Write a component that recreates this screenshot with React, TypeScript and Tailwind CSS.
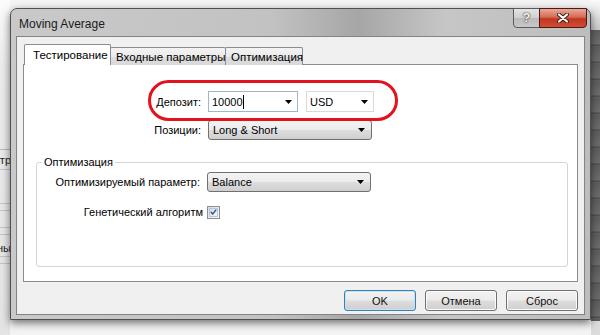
import React from 'react';

const font = "font-['Liberation_Sans','Noto_Sans',sans-serif]";

const Arrow = () => (
    <svg width="7" height="4" viewBox="0 0 7 4" className="shrink-0">
        <path d="M0 0h7L3.5 4z" fill="#000" />
    </svg>
);

// Win7 style drop-down list (grey gradient)
const Combo = ({ value, width }: { value: string; width: string }) => (
    <div className={`${width} h-[20px] flex items-center justify-between pl-[4px] pr-[6px] rounded-[3px] border border-[#707070] bg-[linear-gradient(#f3f3f3,#ececec_48%,#dddddd_52%,#cfcfcf)]`}>
        <span>{value}</span>
        <Arrow />
    </div>
);

const Button = ({ label, primary }: { label: string; primary?: boolean }) => (
    <div className={`w-[72px] h-[21px] flex items-center justify-center rounded-[3px] border ${primary ? 'border-[#3c7fb1] shadow-[inset_0_0_0_1px_#bfe3f7]' : 'border-[#707070] shadow-[inset_0_0_0_1px_#fbfbfb]'} bg-[linear-gradient(#f2f2f2,#ebebeb_48%,#dddddd_52%,#cfcfcf)] text-[#111]`}>
        {label}
    </div>
);

export default function App() {
    return (
        <div className={`${font} w-[600px] h-[335px] overflow-hidden flex bg-[#f4f4f4] text-[11px] leading-[16px] text-black whitespace-nowrap`}>
            {/* background app, left (partly hidden behind the dialog) */}
            <div className="w-[10px] shrink-0 flex flex-col bg-[linear-gradient(#fbfbfb,#ececec_20%,#e4e4e4)] overflow-hidden text-[#222]">
                <div className="h-[150px] border-b border-[#b8b8b8]" />
                <div className="h-[20px] border-b border-[#c4c4c4] flex items-center justify-end -mr-[1px]">тр</div>
                <div className="h-[34px] border-b border-[#c4c4c4]" />
                <div className="h-[7px] border-b border-[#c4c4c4]" />
                <div className="h-[17px] border-b border-[#c4c4c4]" />
                <div className="h-[7px] border-b border-[#c4c4c4]" />
                <div className="h-[22px] border-b border-[#c4c4c4] flex items-end justify-end -mr-[1px]">ны</div>
                <div className="h-[7px] border-b border-[#c4c4c4]" />
                <div className="flex-1" />
            </div>

            <div className="w-[581px] shrink-0 flex flex-col">
                <div className="h-[8px] shrink-0" />
                {/* window */}
                <div className="relative z-10 h-[312px] flex flex-col rounded-t-[7px] border border-[#4f4f4f] bg-[linear-gradient(90deg,#c9c9c9,#c2c2c2_45%,#a6a6a6_60%,#c6c6c6_75%,#bdbdbd)] shadow-[0_3px_9px_rgba(0,0,0,0.55)] px-[5px] pb-[4px]">
                    <div className="h-[27px] shrink-0 flex justify-between">
                        <span className="pl-[3px] pt-[7px] text-[12px] text-[#1a1a1a]">Moving Average</span>
                        <div className="flex -mt-px h-[20px] mr-[-2px]">
                            <div className="w-[27px] flex items-center justify-center rounded-bl-[4px] border border-[#5a5a5a] bg-[linear-gradient(#e4e4e4,#cfcfcf_50%,#b9b9b9_50%,#c8c8c8)] text-[13px] font-bold text-[#f5f5f5] [text-shadow:0_0_2px_#333,0_0_1px_#333]">?</div>
                            <div className="w-[48px] -ml-px flex items-center justify-center rounded-br-[4px] border border-[#4a1a12] bg-[linear-gradient(#e9a999,#d56a55_45%,#c2361f_55%,#d04d33)]">
                                <svg width="12" height="10" viewBox="0 0 12 10">
                                    <path d="M2 1.5l8 7M10 1.5l-8 7" stroke="#3a1a14" strokeWidth="4" strokeLinecap="round" />
                                    <path d="M2 1.5l8 7M10 1.5l-8 7" stroke="#fff" strokeWidth="2.2" strokeLinecap="round" />
                                </svg>
                            </div>
                        </div>
                    </div>

                    {/* client area */}
                    <div className="flex-1 flex flex-col border border-[#838383] bg-[#f0f0f0] px-[6px] pt-[7px]">
                        {/* tabs */}
                        <div className="flex items-end h-[21px] pl-[1px] relative z-10 text-[11.5px]">
                            <div className="h-[21px] w-[87px] bg-white border border-b-0 border-[#898c95] rounded-t-[2px] pl-[8px] pt-[2px]">Тестирование</div>
                            <div className="h-[18px] w-[116px] -ml-px bg-[linear-gradient(#f3f3f3,#ebebeb_50%,#dedede_50%,#d9d9d9)] border border-b-0 border-[#898c95] rounded-t-[2px] pl-[5px] pt-px">Входные параметры</div>
                            <div className="h-[18px] w-[78px] -ml-px bg-[linear-gradient(#f3f3f3,#ebebeb_50%,#dedede_50%,#d9d9d9)] border border-b-0 border-[#898c95] rounded-t-[2px] pl-[5px] pt-px">Оптимизация</div>
                        </div>

                        {/* panel */}
                        <div className="relative h-[218px] -mt-px bg-white border border-[#898c95] flex flex-col">
                            <div className="mt-[26px] flex items-center h-[21px]">
                                <div className="w-[177px] text-right">Депозит:</div>
                                <div className="ml-[7px] w-[90px] h-[21px] flex items-center justify-between pl-[3px] pr-[5px] bg-white border border-[#9fb6cf]">
                                    <span className="flex items-center">10000<span className="inline-block w-px h-[14px] bg-black" /></span>
                                    <Arrow />
                                </div>
                                <div className="ml-[8px] w-[68px] h-[21px] flex items-center justify-between pl-[3px] pr-[5px] bg-white border border-[#d9d9d9]">
                                    <span>USD</span>
                                    <Arrow />
                                </div>
                            </div>
                            <div className="mt-[8px] flex items-center">
                                <div className="w-[177px] text-right">Позиции:</div>
                                <div className="ml-[7px]"><Combo value="Long & Short" width="w-[164px]" /></div>
                            </div>

                            <fieldset className="mt-[14px] ml-[12px] mr-[9px] h-[113px] border border-[#d5d5d5] rounded-[3px]">
                                <legend className="ml-[5px] px-[2px]">Оптимизация</legend>
                                <div className="mt-[2px] flex items-center">
                                    <div className="w-[163px] text-right">Оптимизируемый параметр:</div>
                                    <div className="ml-[7px]"><Combo value="Balance" width="w-[164px]" /></div>
                                </div>
                                <div className="mt-[12px] flex items-center">
                                    <div className="w-[166px] text-right">Генетический алгоритм</div>
                                    <div className="ml-[4px] w-[13px] h-[13px] border border-[#8e8f8f] bg-[linear-gradient(135deg,#dcdcdc,#fafafa)] p-px">
                                        <div className="w-full h-full border border-[#b9c8d8] bg-[linear-gradient(135deg,#cfd9e4,#f2f5f8)] flex items-center justify-center">
                                            <svg width="9" height="8" viewBox="0 0 9 8">
                                                <path d="M1 4l2.5 2.5L8 0.8" stroke="#2d4a8a" strokeWidth="1.6" fill="none" />
                                            </svg>
                                        </div>
                                    </div>
                                </div>
                            </fieldset>

                            {/* red highlight */}
                            <div className="absolute left-[124px] top-[15px] w-[250px] h-[41px] rounded-[21px] border-[3px] border-[#e3121c]" />
                        </div>

                        <div className="mt-[8px] flex justify-end gap-[9px]">
                            <Button label="OK" primary />
                            <Button label="Отмена" />
                            <Button label="Сброс" />
                        </div>
                    </div>
                </div>
                <div className="flex-1" />
            </div>

            {/* background window, right */}
            <div className="w-[9px] shrink-0 flex flex-col">
                <div className="h-[30px] bg-[linear-gradient(#fafafa,#c9c9c9)]" />
                <div className="flex-1 bg-[repeating-linear-gradient(#5e5e5e_0px,#6d6d6d_14px,#4a4a4a_15px,#6a6a6a_17px)]" />
                <div className="h-[14px] bg-[#dcdcdc]" />
            </div>
        </div>
    );
}
